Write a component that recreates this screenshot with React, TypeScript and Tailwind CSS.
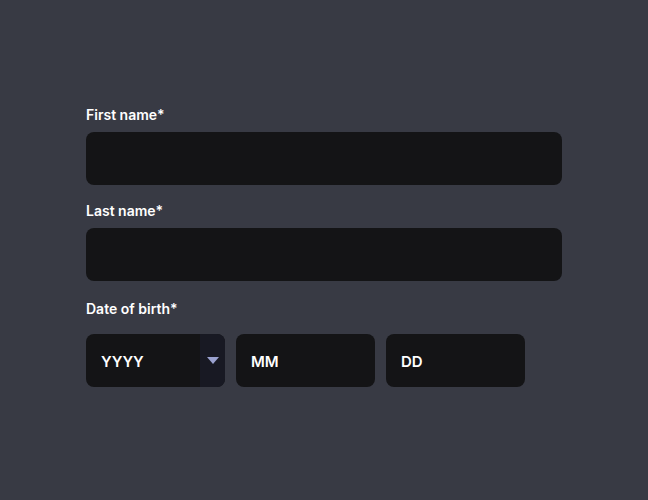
const fieldLabel = "block text-[14px] font-semibold leading-[18px] text-white mb-[8px]";
const textBox = "block w-full h-[53px] rounded-[8px] bg-[#141416]";

const DateBox = ({ text }: { text: string }) => (
  <div className="flex items-center w-[139px] h-[53px] rounded-[8px] bg-[#141416] pl-[15px] pt-[3px] text-[15px] font-semibold text-white">
    {text}
  </div>
);

const App = () => {
  return (
    <div
      className="w-[648px] h-[500px] bg-[#383a44] pt-[106px] pl-[86px]"
      style={{ fontFamily: "Inter, 'Open Sans', sans-serif" }}
    >
      <div className="w-[476px] flex flex-col">
        <div>
          <label className={fieldLabel}>First name*</label>
          <div className={textBox} />
        </div>

        <div className="mt-[17px]">
          <label className={fieldLabel}>Last name*</label>
          <div className={textBox} />
        </div>

        <div className="mt-[19px]">
          <label className="block text-[14px] font-semibold leading-[18px] text-white mb-[16px]">
            Date of birth*
          </label>
          <div className="flex gap-[11px]">
            {/* year select */}
            <div className="flex w-[139px] h-[53px] rounded-[8px] bg-[#141416] overflow-hidden">
              <div className="flex-1 flex items-center pl-[15px] pt-[3px] text-[15px] font-semibold text-white">
                YYYY
              </div>
              <div className="w-[25px] flex items-center justify-center bg-[#181923]">
                <svg width="12" height="7" viewBox="0 0 12 7">
                  <path d="M0 0h12L6 7z" fill="#9aa1cf" />
                </svg>
              </div>
            </div>
            <DateBox text="MM" />
            <DateBox text="DD" />
          </div>
        </div>
      </div>
    </div>
  );
};

export default App;
